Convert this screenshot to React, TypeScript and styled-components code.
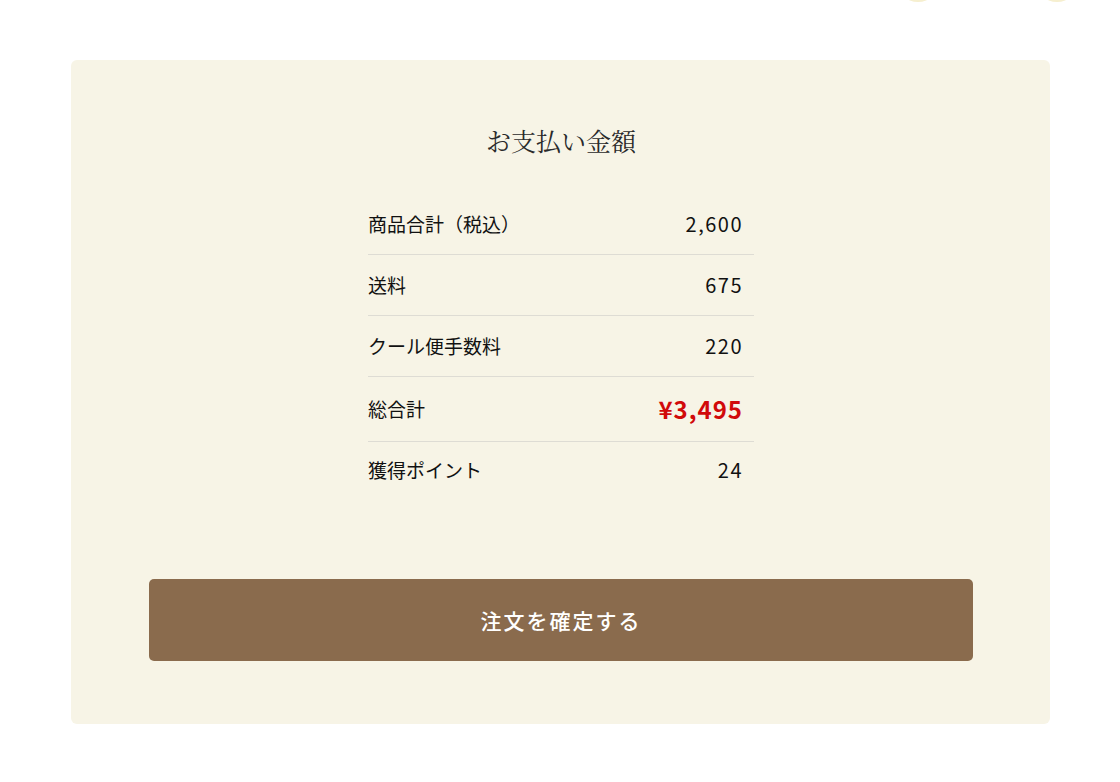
import React from 'react'
import styled, { createGlobalStyle } from 'styled-components'

const GlobalStyle = createGlobalStyle`
  html, body {
    margin: 0;
    padding: 0;
    background: #ffffff;
  }
  body {
    font-family: "Noto Sans CJK JP", "Noto Sans", sans-serif;
    color: #111;
  }
`

const Page = styled.div`
  position: relative;
  width: 1120px;
  min-height: 782px;
  padding-top: 60px;
  box-sizing: border-box;
  overflow: hidden;
`

const Peek = styled.span<{ left: number }>`
  position: absolute;
  top: -40px;
  left: ${({ left }) => left}px;
  width: 42px;
  height: 42px;
  border-radius: 50%;
  background: #f6efcf;
`

const Card = styled.section`
  margin-left: 71px;
  width: 979px;
  height: 664px;
  box-sizing: border-box;
  padding: 62px 77px 0 78px;
  background: #f7f4e6;
  border-radius: 6px;
  display: flex;
  flex-direction: column;
  align-items: center;
`

const Title = styled.h2`
  margin: 0 0 36px;
  font-family: "Noto Serif CJK JP", "Noto Sans CJK JP", serif;
  font-weight: 400;
  font-size: 25px;
  line-height: 36px;
  color: #2a2a2a;
`

const Table = styled.div`
  width: 386px;
  display: flex;
  flex-direction: column;
`

const Row = styled.div<{ last?: boolean }>`
  display: flex;
  justify-content: space-between;
  align-items: center;
  padding: ${({ last }) => (last ? '16px 11px 18px 0' : '18px 11px 18px 0')};
  border-bottom: ${({ last }) => (last ? 'none' : '1px solid #dedcd4')};
`

const Label = styled.span`
  font-size: 19px;
  line-height: 24px;
  font-weight: 400;
  color: #111;
`

const Value = styled.span<{ total?: boolean }>`
  font-size: ${({ total }) => (total ? '24px' : '20px')};
  line-height: ${({ total }) => (total ? '28px' : '24px')};
  font-weight: ${({ total }) => (total ? 700 : 400)};
  color: ${({ total }) => (total ? '#d10a0a' : '#111')};
  letter-spacing: ${({ total }) => (total ? '1px' : '1.5px')};
`

const ConfirmButton = styled.button`
  margin-top: 79px;
  width: 824px;
  height: 82px;
  border: none;
  border-radius: 5px;
  background: #8a6b4d;
  color: #ffffff;
  font-family: "Noto Sans CJK JP", "Noto Sans", sans-serif;
  font-size: 21px;
  font-weight: 500;
  letter-spacing: 2px;
  cursor: pointer;
`

const rows = [
  { label: '商品合計（税込）', value: '2,600' },
  { label: '送料', value: '675' },
  { label: 'クール便手数料', value: '220' },
  { label: '総合計', value: '¥3,495', total: true },
  { label: '獲得ポイント', value: '24' },
]

const App = () => {
  return (
    <Page>
      <GlobalStyle />
      <Peek left={897} />
      <Peek left={1036} />
      <Card>
        <Title>お支払い金額</Title>
        <Table>
          {rows.map((r, i) => (
            <Row key={r.label} last={i === rows.length - 1}>
              <Label>{r.label}</Label>
              <Value total={r.total}>{r.value}</Value>
            </Row>
          ))}
        </Table>
        <ConfirmButton>注文を確定する</ConfirmButton>
      </Card>
    </Page>
  )
}

export default App
